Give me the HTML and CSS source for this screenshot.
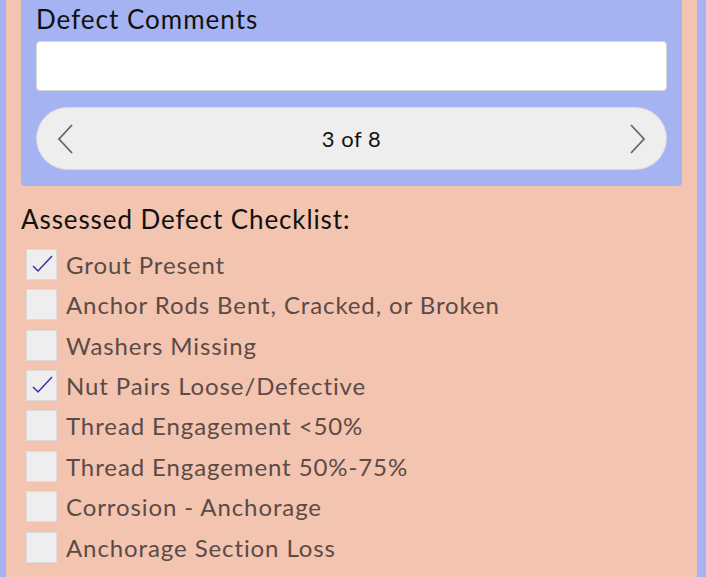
FILE: index.html
```html
<!DOCTYPE html>
<html lang="en">
<head>
    <meta charset="UTF-8">
    <meta name="viewport" content="width=device-width, initial-scale=1.0">
    <title>Defect Checklist</title>
    <link rel="stylesheet" href="styles.css">
</head>
<body>

    <div class="page">

        <!-- Comments panel -->
        <div class="panel">
            <h2 class="panel-title">Defect Comments</h2>
            <input class="comment-input" type="text">
            <div class="pager">
                <button class="pager-arrow">
                    <svg width="18" height="30" viewBox="0 0 18 30"><path d="M15 1 L2 15 L15 29" fill="none" stroke="#666" stroke-width="1.8"/></svg>
                </button>
                <span class="pager-text">3 of 8</span>
                <button class="pager-arrow">
                    <svg width="18" height="30" viewBox="0 0 18 30"><path d="M3 1 L16 15 L3 29" fill="none" stroke="#666" stroke-width="1.8"/></svg>
                </button>
            </div>
        </div>

        <!-- Checklist -->
        <h3 class="list-title">Assessed Defect Checklist:</h3>
        <div class="checklist">
            <label class="item"><span class="box checked"><svg width="31" height="31" viewBox="0 0 31 31"><path d="M7 17 L12 22 L26 7" fill="none" stroke="#3a2fa8" stroke-width="1.5"/></svg></span>Grout Present</label>
            <label class="item"><span class="box"></span>Anchor Rods Bent, Cracked, or Broken</label>
            <label class="item"><span class="box"></span>Washers Missing</label>
            <label class="item"><span class="box checked"><svg width="31" height="31" viewBox="0 0 31 31"><path d="M7 17 L12 22 L26 7" fill="none" stroke="#3a2fa8" stroke-width="1.5"/></svg></span>Nut Pairs Loose/Defective</label>
            <label class="item"><span class="box"></span>Thread Engagement &lt;50%</label>
            <label class="item"><span class="box"></span>Thread Engagement 50%-75%</label>
            <label class="item"><span class="box"></span>Corrosion - Anchorage</label>
            <label class="item"><span class="box"></span>Anchorage Section Loss</label>
        </div>

    </div>

</body>
</html>
```

FILE: styles.css
```css
body {
    margin: 0;
    padding: 0;
    background: #a5b3f2;
    font-family: Lato, "Noto Sans", sans-serif;
    overflow: hidden;
}

.page {
    margin: 0 9px 0 6px;
    padding: 0 15px 30px;
    background: #f3c4b0;
    min-height: 100vh;
}

/* Comments panel */
.panel {
    background: #a5b3f2;
    padding: 2px 15px 16px;
    border-radius: 0 0 4px 4px;
}

.panel-title {
    margin: 0 0 5px;
    font-size: 26px;
    font-weight: normal;
    letter-spacing: 1px;
    line-height: 34px;
    color: #111;
}

.comment-input {
    display: block;
    box-sizing: border-box;
    width: 100%;
    height: 50px;
    margin: 0 0 16px;
    border: 1px solid #d6d6d6;
    border-radius: 4px;
    background: #fff;
}

.pager {
    display: flex;
    align-items: center;
    justify-content: space-between;
    height: 63px;
    box-sizing: border-box;
    padding: 0 20px;
    background: #eeeeee;
    border: 1px solid #d8d8de;
    border-radius: 32px;
}

.pager-arrow {
    border: none;
    background: none;
    padding: 0;
    display: flex;
    cursor: pointer;
}

.pager-text {
    font-size: 22px;
    letter-spacing: 0.5px;
    color: #111;
}

/* Checklist */
.list-title {
    margin: 16px 0 8px;
    font-size: 26px;
    font-weight: normal;
    letter-spacing: 0.9px;
    line-height: 34px;
    color: #111;
}

.checklist {
    display: flex;
    flex-direction: column;
}

.item {
    display: flex;
    align-items: center;
    gap: 9px;
    height: 40.43px;
    padding-left: 5px;
    font-size: 24px;
    letter-spacing: 0.9px;
    color: #5b4b47;
}

.box {
    width: 31px;
    height: 31px;
    box-sizing: border-box;
    background: #eeeeee;
    border: 1px solid #dcdcdc;
    display: flex;
    align-items: center;
    justify-content: center;
    flex-shrink: 0;
}

.box svg {
    display: block;
    margin: -1px;
}
```
